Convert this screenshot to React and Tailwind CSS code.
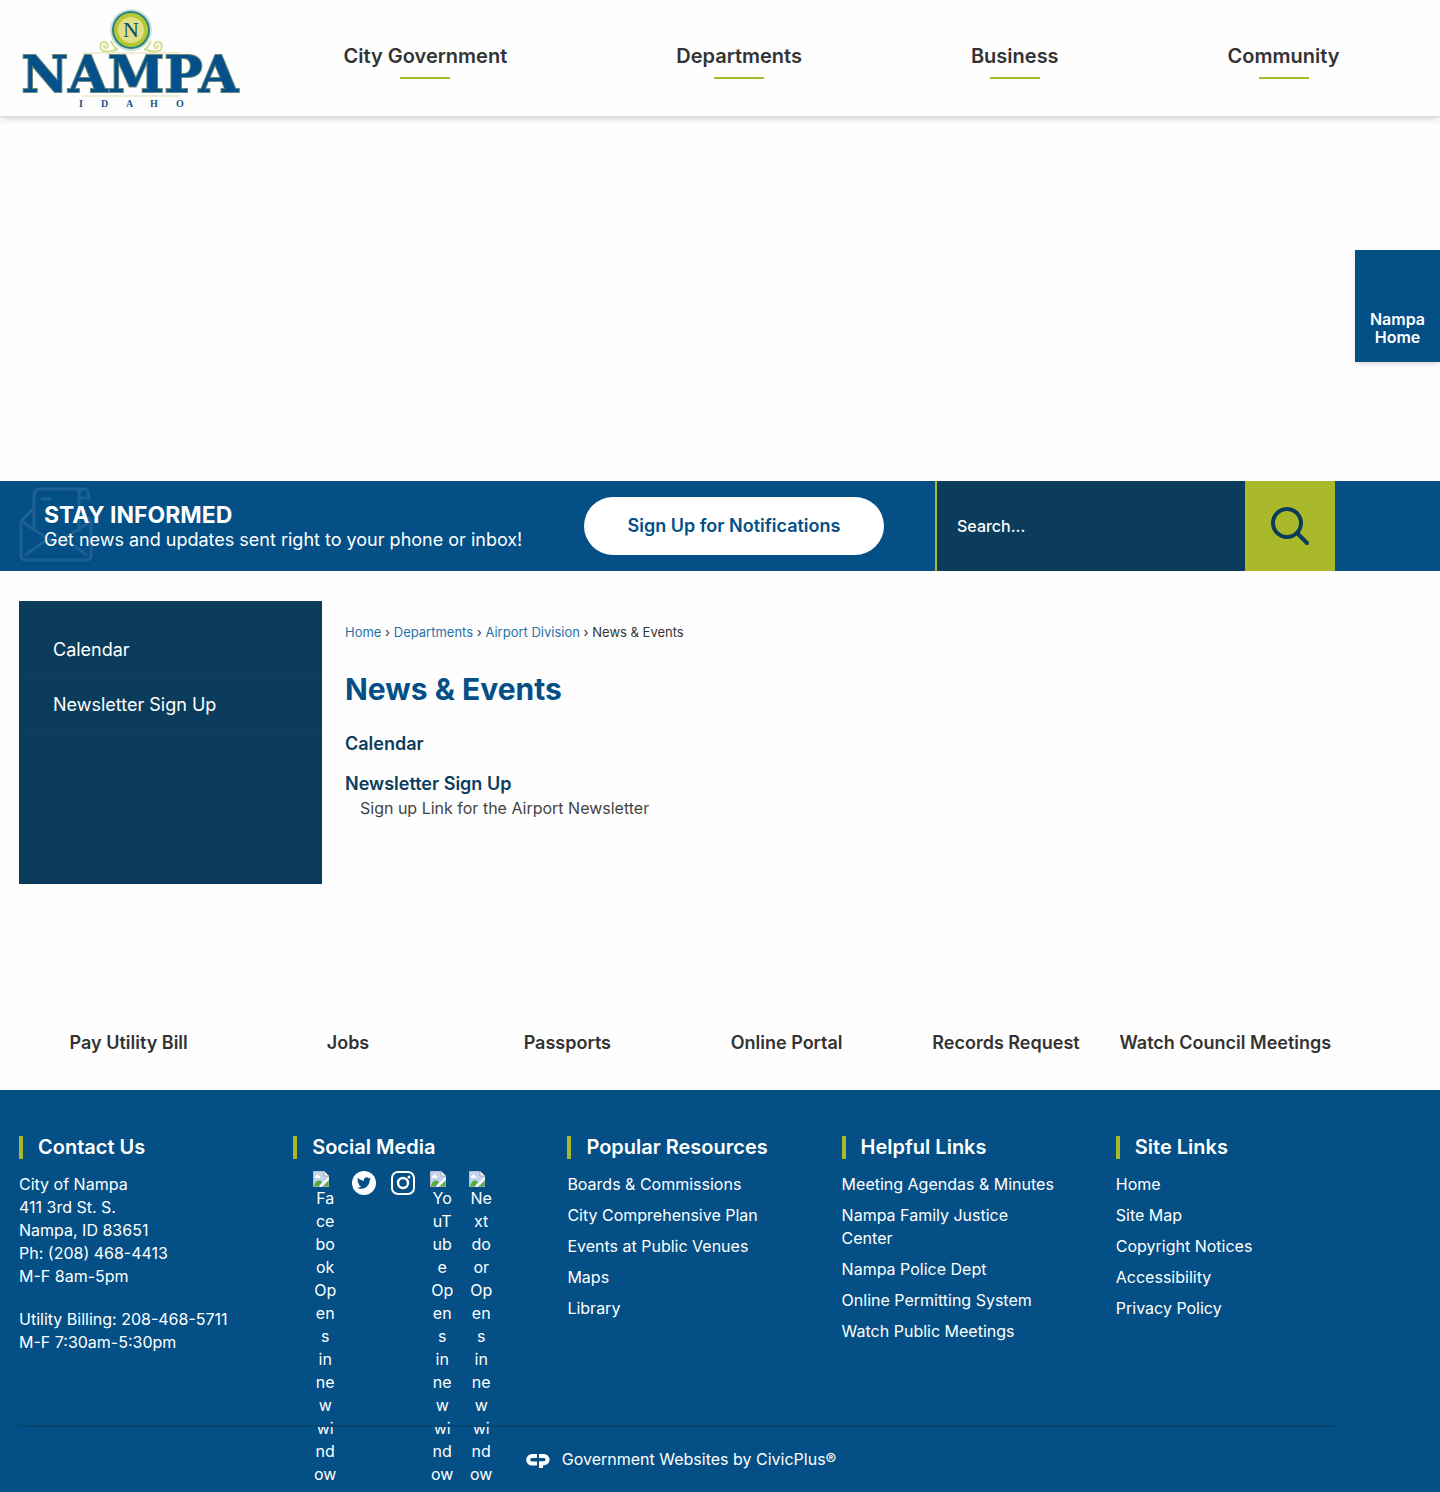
import { FaTwitter } from "react-icons/fa"

const navItems = ["City Government", "Departments", "Business", "Community"]

const quickLinks = [
  "Pay Utility Bill",
  "Jobs",
  "Passports",
  "Online Portal",
  "Records Request",
  "Watch Council Meetings",
]

const opensInNewWindow = ["Op", "en", "s", "in", "ne", "w", "wi", "nd", "ow"]

const linkColumns = [
  {
    title: "Popular Resources",
    links: ["Boards & Commissions", "City Comprehensive Plan", "Events at Public Venues", "Maps", "Library"],
  },
  {
    title: "Helpful Links",
    links: [
      "Meeting Agendas & Minutes",
      "Nampa Family Justice Center",
      "Nampa Police Dept",
      "Online Permitting System",
      "Watch Public Meetings",
    ],
  },
  {
    title: "Site Links",
    links: ["Home", "Site Map", "Copyright Notices", "Accessibility", "Privacy Policy"],
  },
]

function Logo() {
  return (
    <svg width="226" height="100" viewBox="0 0 226 100" role="img" aria-label="Nampa Idaho">
      <g fill="none" stroke="#d6de90" strokeWidth="2">
        <path d="M101 40c-4 2-10 3-14 2-5-1-5-9 0-9 4 0 5 5 2 6-2 0-3-2-1-3M94 32c2 4 3 7 6 8" />
        <path d="M127 40c4 2 10 3 14 2 5-1 5-9 0-9-4 0-5 5-2 6 2 0 3-2 1-3M134 32c-2 4-3 7-6 8" />
      </g>
      <circle cx="114" cy="21" r="21" fill="#c9e2da" />
      <circle cx="114" cy="21" r="19" fill="#2f7f86" />
      <circle cx="114" cy="21" r="17" fill="#b4c833" />
      <circle cx="114" cy="21" r="13" fill="#e3df86" />
      <text x="114" y="28" textAnchor="middle" fill="#0b4a6f" fontSize="22" fontFamily="Liberation Serif, serif">
        N
      </text>
      <path d="M65 44h98M65 87h98" stroke="#dedcae" strokeWidth="1" />
      <text
        x="113"
        y="83"
        textAnchor="middle"
        fill="#04508a"
        stroke="#6f8a78"
        strokeWidth="2"
        paintOrder="stroke"
        fontSize="51"
        fontWeight="700"
        fontFamily="DejaVu Serif, serif"
      >
        NAMPA
      </text>
      <text x="62 84 109 133 159" y="98" fill="#1b5587" fontSize="10" fontWeight="700" fontFamily="Liberation Serif, serif">
        IDAHO
      </text>
    </svg>
  )
}

function EnvelopeIcon() {
  return (
    <svg
      className="absolute left-[19px] top-[6px]"
      width="74"
      height="76"
      viewBox="0 0 74 76"
      fill="none"
      stroke="#1d6194"
      strokeWidth="3"
      strokeLinejoin="round"
      aria-hidden="true"
    >
      <path d="M15 44V8c0-4 2-6 6-6h44c4 0 5 3 5 9h-10V8c0-4 1-6 5-6M60 11v34M22 12h10" />
      <path d="M15 21L2 34v34c0 3 1 5 4 5h62c3 0 4-2 4-5V34l-9-8M2 34l32 21h6l32-21M6 68l20-14M68 68L48 54" />
    </svg>
  )
}

function SearchIcon() {
  return (
    <svg width="40" height="40" viewBox="0 0 40 40" fill="none" stroke="#0b3c5c" strokeWidth="4" aria-hidden="true">
      <circle cx="17" cy="17" r="14" />
      <path d="M27 27l10 10" strokeLinecap="round" />
    </svg>
  )
}

function BrokenImage() {
  return (
    <svg className="block self-start" width="16" height="16" viewBox="0 0 16 16" aria-hidden="true">
      <path d="M0 0h11l5 5v3l-9 8H0z" fill="#c3d4ee" />
      <path d="M0 16V0h11M0 15.500h7" fill="none" stroke="#a6a6a6" />
      <path d="M11 0v5h5z" fill="#fff" stroke="#a6a6a6" />
      <path d="M1 15c1-5 5-7 8-4l-3 4z" fill="#4fae3a" />
      <path d="M3 5c0-2 3-2 3 0 2 0 2 2 0 2H3c-2 0-2-2 0-2z" fill="#fff" />
      <path d="M16 9v7H9z" fill="#5aae46" stroke="#b9b9b9" />
      <path d="M16 7L7 16" stroke="#fff" strokeWidth="2" />
    </svg>
  )
}

function InstagramIcon() {
  return (
    <svg width="24" height="24" viewBox="0 0 24 24" fill="none" stroke="#fff" strokeWidth="2" aria-hidden="true">
      <rect x="1" y="1" width="22" height="22" rx="6" />
      <circle cx="12" cy="12" r="5" strokeWidth="2.4" />
      <circle cx="18" cy="6" r="1.500" fill="#fff" stroke="none" />
    </svg>
  )
}

function CivicPlusIcon() {
  return (
    <svg width="24" height="16" viewBox="0 0 24 16" fill="none" stroke="#fff" strokeWidth="4" aria-hidden="true">
      <path d="M11 4H6a3.800 3.800 0 0 0 0 7.600h5" />
      <path d="M13 4h5a3.600 3.600 0 0 1 0 7.200h-3V16" />
    </svg>
  )
}

function FooterHeading({ children }) {
  return (
    <h2 className="border-l-4 border-[#a9b92a] pl-[15px] text-xl leading-[23px] font-semibold whitespace-nowrap">
      {children}
    </h2>
  )
}

function BrokenSocial({ label, name }) {
  return (
    <li className="h-6 w-6">
      <a href="#" aria-label={label} className="flex flex-col items-center">
        <BrokenImage />
        {[...name, ...opensInNewWindow].map((part, i) => (
          <span key={i}>{part}</span>
        ))}
      </a>
    </li>
  )
}

export default function App() {
  return (
    <div className="relative bg-[#fefefe] font-['Inter',sans-serif] text-base text-[#333]">
      <header className="relative flex h-[117px] items-start border-b border-[#ddd] bg-[#fefefe] pr-4 shadow-md">
        <a href="#" className="ml-[17px] pt-[9px]">
          <Logo />
        </a>
        <nav className="ml-4 flex flex-1 justify-around pt-11">
          {navItems.map((item) => (
            <a key={item} href="#" className="flex flex-col items-center gap-2 text-xl leading-[25px] font-semibold">
              {item}
              <span className="h-[2px] w-[50px] bg-[#a9b92a]" />
            </a>
          ))}
        </nav>
      </header>

      <a
        href="#"
        className="absolute top-[250px] right-0 flex h-28 w-[85px] items-end justify-center bg-[#034f86] px-3 pb-4 text-center text-base leading-[18px] font-semibold text-white shadow-md"
      >
        Nampa Home
      </a>

      <section className="relative mt-[364px] flex h-[90px] bg-[#034f86] pr-[105px] text-white">
        <EnvelopeIcon />
        <div className="relative flex flex-1 items-center justify-between pr-[51px] pl-11">
          <div className="pt-[3px]">
            <h2 className="text-[23px] leading-6 font-bold">STAY INFORMED</h2>
            <p className="text-lg leading-[25px]">Get news and updates sent right to your phone or inbox!</p>
          </div>
          <a
            href="#"
            className="flex h-[58px] w-[300px] items-center justify-center rounded-full bg-white text-lg font-semibold text-[#034f86]"
          >
            Sign Up for Notifications
          </a>
        </div>
        <form className="flex w-[400px] border-l-2 border-[#a9b92a]" onSubmit={(e) => e.preventDefault()}>
          <input
            type="search"
            aria-label="Search"
            placeholder="Search..."
            className="min-w-0 flex-1 bg-[#0b3c5c] px-5 text-base font-medium text-white placeholder:text-white"
          />
          <button type="submit" aria-label="Submit search" className="flex w-[90px] items-center justify-center bg-[#a9b92a]">
            <SearchIcon />
          </button>
        </form>
      </section>

      <div className="flex gap-[23px] pt-[30px] pr-[105px] pl-[19px]">
        <aside className="min-h-[283px] w-[303px] bg-[#0b3c5c] pt-[22px] text-lg text-white">
          {["Calendar", "Newsletter Sign Up"].map((item) => (
            <a key={item} href="#" className="block border-b border-[#10415f] px-[34px] py-[13px] leading-[28px]">
              {item}
            </a>
          ))}
        </aside>
        <main className="flex-1 pt-[22px]">
          <nav aria-label="Breadcrumb" className="text-[13px] leading-[18px] text-[#2a71a8]">
            <a href="#">Home</a> <span className="text-[#333]">›</span> <a href="#">Departments</a>{" "}
            <span className="text-[#333]">›</span> <a href="#">Airport Division</a>{" "}
            <span className="text-[#333]">› News &amp; Events</span>
          </nav>
          <h1 className="mt-[30px] text-3xl leading-9 font-bold text-[#034f86]">News &amp; Events</h1>
          <ul className="mt-[25px] flex flex-col gap-4">
            <li>
              <a href="#" className="text-lg leading-6 font-semibold text-[#0b3c5c]">
                Calendar
              </a>
            </li>
            <li>
              <a href="#" className="text-lg leading-6 font-semibold text-[#0b3c5c]">
                Newsletter Sign Up
              </a>
              <p className="pl-[15px] leading-6 text-[#444]">Sign up Link for the Airport Newsletter</p>
            </li>
          </ul>
        </main>
      </div>

      <nav className="mt-[147px] mr-[105px] ml-[19px] grid grid-cols-6 pb-[35px] text-center text-lg leading-6 font-semibold whitespace-nowrap">
        {quickLinks.map((item) => (
          <a key={item} href="#">
            {item}
          </a>
        ))}
      </nav>

      <footer className="bg-[#034f86] pt-[46px] pr-[105px] pb-[21px] pl-[19px] leading-[23px] text-white">
        <div className="grid grid-cols-5 gap-[55px]">
          <section>
            <FooterHeading>Contact Us</FooterHeading>
            <address className="mt-[14px] whitespace-nowrap not-italic">
              City of Nampa
              <br />
              411 3rd St. S.
              <br />
              Nampa, ID 83651
              <br />
              Ph: (208) 468-4413
              <br />
              M-F 8am-5pm
              <p className="mt-5">
                Utility Billing: 208-468-5711
                <br />
                M-F 7:30am-5:30pm
              </p>
            </address>
          </section>
          <section>
            <FooterHeading>Social Media</FooterHeading>
            <ul className="mt-3 flex gap-[15px] pl-5">
              <BrokenSocial label="Facebook Opens in new window" name={["Fa", "ce", "bo", "ok"]} />
              <li>
                <a href="#" aria-label="Twitter" className="flex h-6 w-6 items-center justify-center rounded-full bg-white text-[#034f86]">
                  <FaTwitter size={14} />
                </a>
              </li>
              <li>
                <a href="#" aria-label="Instagram">
                  <InstagramIcon />
                </a>
              </li>
              <BrokenSocial label="YouTube Opens in new window" name={["Yo", "uT", "ub", "e"]} />
              <BrokenSocial label="Nextdoor Opens in new window" name={["Ne", "xt", "do", "or"]} />
            </ul>
          </section>
          {linkColumns.map((column) => (
            <section key={column.title}>
              <FooterHeading>{column.title}</FooterHeading>
              <ul className="mt-[14px] flex flex-col gap-2">
                {column.links.map((link) => (
                  <li key={link}>
                    <a href="#">{link}</a>
                  </li>
                ))}
              </ul>
            </section>
          ))}
        </div>
        <hr className="relative mt-[71px] border-t-2 border-[#05466f]" />
        <div className="mt-[21px] flex items-center justify-center gap-3 pl-2 whitespace-nowrap">
          <CivicPlusIcon />
          <a href="#">Government Websites by CivicPlus®</a>
        </div>
      </footer>
    </div>
  )
}
